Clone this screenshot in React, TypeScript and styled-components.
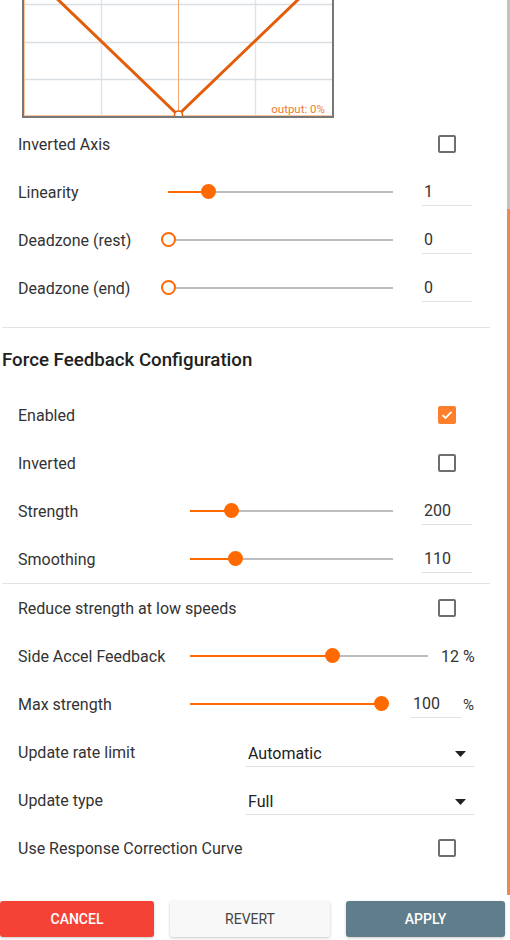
import React, { useLayoutEffect, useRef } from "react";
import styled, { createGlobalStyle } from "styled-components";

const Global = createGlobalStyle`
  html, body { margin: 0; padding: 0; background: #fff; }
  body { font-family: Roboto, "Liberation Sans", Arial, sans-serif; color: #333; }
  * { box-sizing: border-box; }
`;

const ORANGE = "#ff6a00";

const Page = styled.div`
  width: 510px;
  height: 940px;
  display: flex;
  flex-direction: column;
  overflow: hidden;
`;

const ScrollWrap = styled.div`
  position: relative;
  height: 895px;
  flex: none;
`;

const ScrollArea = styled.div`
  height: 100%;
  overflow: hidden;
`;

const Content = styled.div`
  padding: 0 20px 58px 2px;
`;

const ScrollTrack = styled.div`
  position: absolute;
  top: 0;
  right: 0;
  bottom: 0;
  width: 3px;
  background: #c2c2c2;
`;

const ScrollThumb = styled.div<{ $top: number }>`
  position: absolute;
  left: 0;
  right: 0;
  bottom: 0;
  top: ${(p) => p.$top}px;
  background: #e88b52;
`;

const ChartFrame = styled.div`
  margin-left: 20px;
  width: 312px;
  height: 153px;
  border: 2px solid #777;
  display: flex;
`;

const Section = styled.div<{ $mt?: number }>`
  margin-top: ${(p) => p.$mt ?? 0}px;
  display: flex;
  flex-direction: column;
`;

const Row = styled.div`
  height: 48px;
  display: flex;
  align-items: center;
  padding: 1px 18px 0 16px;
`;

const Label = styled.div<{ $w?: number }>`
  font-size: 16px;
  color: #333;
  width: ${(p) => (p.$w ? `${p.$w}px` : "auto")};
  flex: ${(p) => (p.$w ? "none" : "1")};
  white-space: nowrap;
`;

const Divider = styled.div<{ $mt?: number }>`
  height: 1px;
  background: #e3e3e3;
  margin-top: ${(p) => p.$mt ?? 0}px;
`;

const Heading = styled.h2`
  margin: 0;
  padding: 20px 0 19px 0;
  font-size: 18.7px;
  line-height: 24px;
  font-weight: 500;
  color: #212121;
`;

const RightCol = styled.div`
  width: 50px;
  flex: none;
  display: flex;
  justify-content: center;
  margin-top: -1px;
`;

const Box = styled.div<{ $checked?: boolean }>`
  width: 18px;
  height: 18px;
  border-radius: 2px;
  border: 2px solid ${(p) => (p.$checked ? "#fd7f2c" : "#6e6e6e")};
  background: ${(p) => (p.$checked ? "#fd7f2c" : "#fff")};
  display: flex;
  align-items: center;
  justify-content: center;
`;

const SliderBox = styled.div<{ $w: number; $pct: number }>`
  position: relative;
  width: ${(p) => p.$w}px;
  flex: none;
  height: 2px;
  margin-top: -2px;
  background: linear-gradient(
    to right,
    ${ORANGE} 0,
    ${ORANGE} ${(p) => p.$pct}%,
    #bdbdbd ${(p) => p.$pct}%,
    #bdbdbd 100%
  );
`;

const Thumb = styled.div<{ $hollow?: boolean }>`
  position: absolute;
  top: 50%;
  width: 15px;
  height: 15px;
  margin: -7.5px 0 0 -7.5px;
  border-radius: 50%;
  background: ${(p) => (p.$hollow ? "#fff" : ORANGE)};
  border: 2px solid ${ORANGE};
`;

const Spacer = styled.div<{ $w: number }>`
  width: ${(p) => p.$w}px;
  flex: none;
`;

const ValueInput = styled.div<{ $w?: number }>`
  width: ${(p) => p.$w ?? 50}px;
  height: 28px;
  flex: none;
  margin-top: -1px;
  border-bottom: 1px solid #e0e0e0;
  padding-left: 2px;
  font-size: 16px;
  line-height: 28px;
  color: #333;
`;

const PlainValue = styled.div`
  font-size: 16px;
  color: #333;
  white-space: nowrap;
`;

const Unit = styled.div`
  font-size: 15px;
  color: #333;
  margin-left: 2px;
`;

const Select = styled.div`
  width: 228px;
  flex: none;
  margin-left: auto;
  margin-right: -2px;
  height: 28px;
  border-bottom: 1px solid #e0e0e0;
  display: flex;
  align-items: center;
  justify-content: space-between;
  padding: 3px 8px 0 2px;
  font-size: 16px;
  color: #222;
`;

const Footer = styled.div`
  flex: 1;
  display: flex;
  gap: 16px;
  padding-top: 6px;
`;

const Btn = styled.button<{ $w: number; $variant: "cancel" | "revert" | "apply" }>`
  width: ${(p) => p.$w}px;
  height: 36px;
  border: none;
  border-radius: 3px;
  font-family: Roboto, "Liberation Sans", Arial, sans-serif;
  font-size: 14px;
  text-transform: uppercase;
  font-weight: ${(p) => (p.$variant === "revert" ? 400 : 500)};
  color: ${(p) => (p.$variant === "revert" ? "#444" : "#fff")};
  background: ${(p) =>
    p.$variant === "cancel" ? "#f44336" : p.$variant === "apply" ? "#607d8b" : "#f8f8f8"};
  box-shadow: 0 1px 3px rgba(0, 0, 0, 0.22);
  padding: 0;
`;

const Check = ({ checked }: { checked?: boolean }) => (
  <RightCol>
    <Box $checked={checked}>
      {checked && (
        <svg width="12" height="10" viewBox="0 0 12 10">
          <path d="M1.5 5.2 L4.5 8 L10.5 1.8" fill="none" stroke="#fff" strokeWidth="1.8" />
        </svg>
      )}
    </Box>
  </RightCol>
);

const Slider = ({ w, pct, hollow }: { w: number; pct: number; hollow?: boolean }) => (
  <SliderBox $w={w} $pct={pct}>
    <Thumb $hollow={hollow} style={{ left: `${pct}%` }} />
  </SliderBox>
);

const Chart = () => (
  <ChartFrame>
    <svg width="308" height="149" viewBox="0 0 308 149">
      {[77, 231].map((x) => (
        <line key={x} x1={x + 0.5} y1={0} x2={x + 0.5} y2={149} stroke="#dfe4e8" strokeWidth="1.5" />
      ))}
      {[37, 75, 112].map((y) => (
        <line key={y} x1={0} y1={y + 0.5} x2={308} y2={y + 0.5} stroke="#d9dee2" strokeWidth="1.5" />
      ))}
      <line x1={154.5} y1={0} x2={154.5} y2={149} stroke="#f4a671" strokeWidth="1" />
      <line x1={0.5} y1={0} x2={0.5} y2={149} stroke="#f9c6a0" strokeWidth="1" />
      <line x1={0} y1={148.5} x2={308} y2={148.5} stroke="#f9c6a0" strokeWidth="1" />
      <polyline points="0,0 154,148 308,0" fill="none" stroke="#e35d0a" strokeWidth="3" />
      <circle cx={154.5} cy={148} r={4} fill="#fff" stroke="#e35d0a" strokeWidth="1.5" />
      <text
        x={301}
        y={146}
        textAnchor="end"
        fontSize="11.5"
        fill="#f07b30"
        fontFamily="Roboto, 'Liberation Sans', Arial, sans-serif"
      >
        output: 0%
      </text>
    </svg>
  </ChartFrame>
);

const Caret = () => (
  <svg width="11" height="6" viewBox="0 0 11 6">
    <path d="M0 0 L11 0 L5.5 6 Z" fill="#222" />
  </svg>
);

export default function App() {
  const ref = useRef<HTMLDivElement>(null);
  useLayoutEffect(() => {
    if (ref.current) ref.current.scrollTop = 35;
  }, []);

  return (
    <>
      <Global />
      <Page>
        <ScrollWrap>
          <ScrollArea ref={ref}>
            <Content>
              <Chart />
              <Section $mt={2}>
                <Row>
                  <Label>Inverted Axis</Label>
                  <Check />
                </Row>
                <Row>
                  <Label $w={150}>Linearity</Label>
                  <Slider w={225} pct={18.2} />
                  <Spacer $w={29} />
                  <ValueInput>1</ValueInput>
                </Row>
                <Row>
                  <Label $w={150}>Deadzone (rest)</Label>
                  <Slider w={225} pct={0} hollow />
                  <Spacer $w={29} />
                  <ValueInput>0</ValueInput>
                </Row>
                <Row>
                  <Label $w={150}>Deadzone (end)</Label>
                  <Slider w={225} pct={0} hollow />
                  <Spacer $w={29} />
                  <ValueInput>0</ValueInput>
                </Row>
              </Section>
              <Divider $mt={15} />
              <Heading>Force Feedback Configuration</Heading>
              <Section>
                <Row>
                  <Label>Enabled</Label>
                  <Check checked />
                </Row>
                <Row>
                  <Label>Inverted</Label>
                  <Check />
                </Row>
                <Row>
                  <Label $w={172}>Strength</Label>
                  <Slider w={203} pct={20.2} />
                  <Spacer $w={29} />
                  <ValueInput>200</ValueInput>
                </Row>
                <Row>
                  <Label $w={172}>Smoothing</Label>
                  <Slider w={203} pct={22.4} />
                  <Spacer $w={29} />
                  <ValueInput>110</ValueInput>
                </Row>
              </Section>
              <Divider />
              <Section>
                <Row>
                  <Label>Reduce strength at low speeds</Label>
                  <Check />
                </Row>
                <Row>
                  <Label $w={172}>Side Accel Feedback</Label>
                  <Slider w={238} pct={60} />
                  <Spacer $w={13} />
                  <PlainValue>12 %</PlainValue>
                </Row>
                <Row>
                  <Label $w={172}>Max strength</Label>
                  <Slider w={191} pct={100} />
                  <Spacer $w={30} />
                  <ValueInput>100</ValueInput>
                  <Unit>%</Unit>
                </Row>
                <Row>
                  <Label>Update rate limit</Label>
                  <Select>
                    <span>Automatic</span>
                    <Caret />
                  </Select>
                </Row>
                <Row>
                  <Label>Update type</Label>
                  <Select>
                    <span>Full</span>
                    <Caret />
                  </Select>
                </Row>
                <Row>
                  <Label>Use Response Correction Curve</Label>
                  <Check />
                </Row>
              </Section>
            </Content>
          </ScrollArea>
          <ScrollTrack>
            <ScrollThumb $top={209} />
          </ScrollTrack>
        </ScrollWrap>
        <Footer>
          <Btn $w={154} $variant="cancel">Cancel</Btn>
          <Btn $w={160} $variant="revert">Revert</Btn>
          <Btn $w={159} $variant="apply">Apply</Btn>
        </Footer>
      </Page>
    </>
  );
}
